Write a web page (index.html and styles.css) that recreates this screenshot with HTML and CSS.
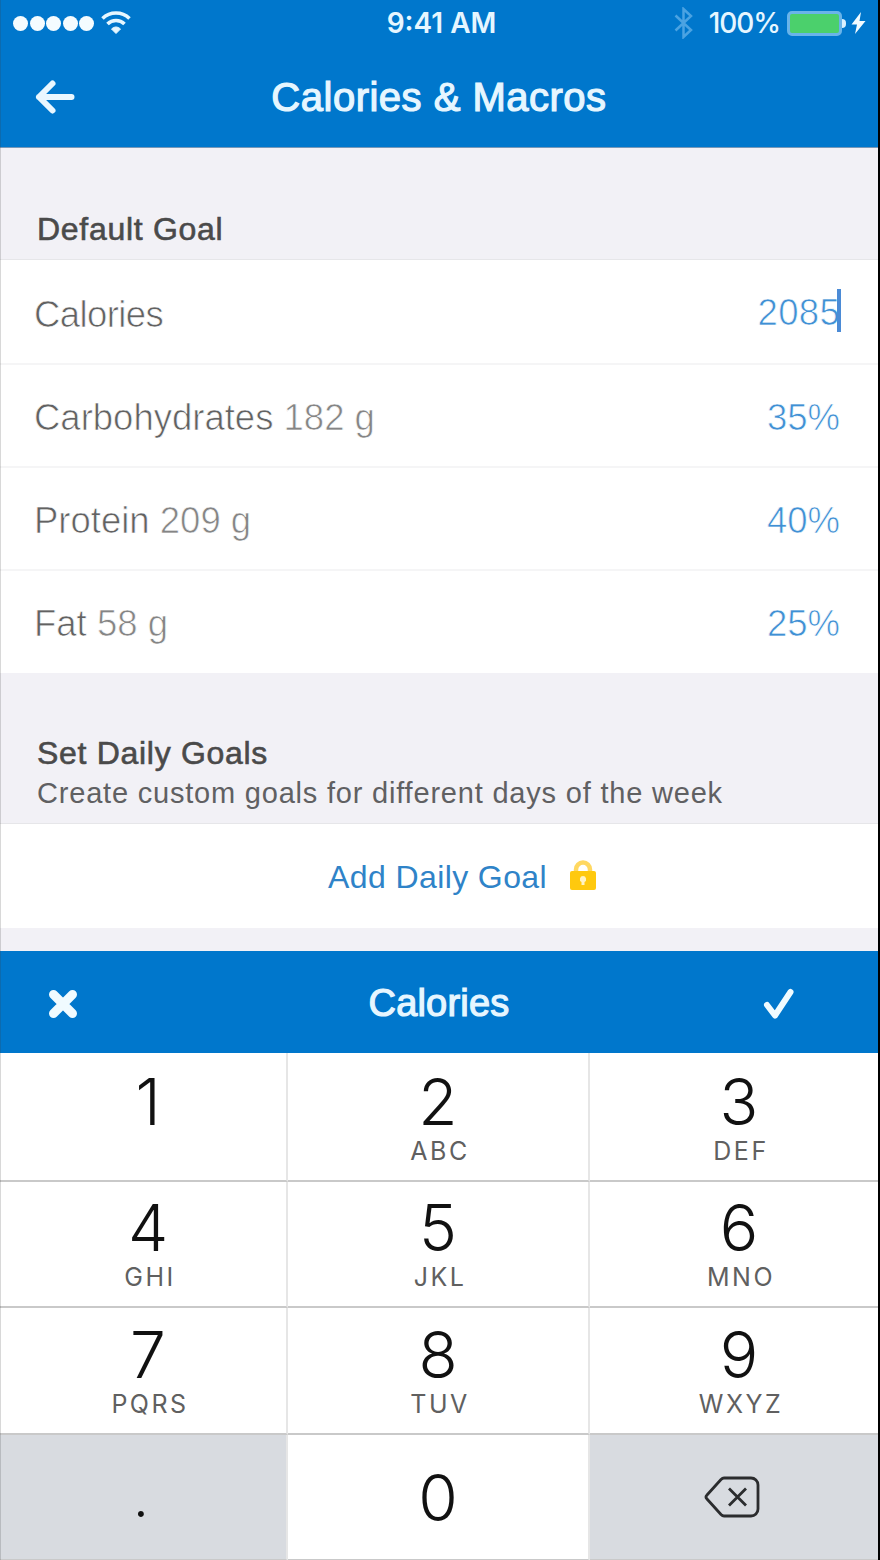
FILE: index.html
```html
<!DOCTYPE html>
<html lang="en">
<head>
  <meta charset="UTF-8" />
  <meta name="viewport" content="width=device-width, initial-scale=1.0"/>
  <title>Calories &amp; Macros</title>
  <link rel="stylesheet" href="styles.css">
</head>
<body>
  <div class="phone">
    <header class="header">
      <div class="status">
        <div class="status-left">
          <span class="signal"><i></i><i></i><i></i><i></i><i></i></span>
          <svg class="wifi" width="30" height="24" viewBox="0 0 30 24" fill="none" stroke="#e6f7ff" stroke-width="3.6">
            <path d="M1.500 8.500a19.500 19.500 0 0 1 27 0"/>
            <path d="M6.500 14a12 12 0 0 1 17 0"/>
            <path d="M15 23.500l-4.500-4.500a6 6 0 0 1 9 0z" fill="#e6f7ff" stroke-width="1"/>
          </svg>
        </div>
        <div class="time">9:41 AM</div>
        <div class="status-right">
          <svg class="bluetooth" width="20" height="32" viewBox="0 0 20 32" fill="none" stroke="#4ba3e2" stroke-width="2.500">
            <path d="M1.500 8.500l15.500 14.500l-7.500 7v-28l7.500 7l-15.500 14.500"/>
          </svg>
          <span class="percent">100%</span>
          <span class="battery"></span>
          <span class="battery-cap"></span>
          <svg class="bolt" width="15" height="22" viewBox="0 0 15 22" fill="#f2fbff">
            <path d="M10 0L0.500 12.500h5.500L4 22L14.500 9H8.500z"/>
          </svg>
        </div>
      </div>
      <div class="nav">
        <svg class="back" width="42" height="36" viewBox="0 0 42 36" fill="none" stroke="#e9f7ff" stroke-width="6" stroke-linecap="round" stroke-linejoin="round">
          <path d="M18.500 4.500L5 18l13.500 13.500M5 18h32.500"/>
        </svg>
        <h1>Calories &amp; Macros</h1>
      </div>
    </header>

    <section class="heading heading-default">
      <h2>Default Goal</h2>
    </section>

    <div class="rows">
      <div class="row">
        <span class="name short">Calories</span>
        <span class="value editing">2085</span>
      </div>
      <div class="row">
        <span class="name">Carbohydrates <span class="grams">182 g</span></span>
        <span class="value">35%</span>
      </div>
      <div class="row">
        <span class="name">Protein <span class="grams">209 g</span></span>
        <span class="value">40%</span>
      </div>
      <div class="row">
        <span class="name">Fat <span class="grams">58 g</span></span>
        <span class="value">25%</span>
      </div>
    </div>

    <section class="heading heading-daily">
      <h2>Set Daily Goals</h2>
      <p>Create custom goals for different days of the week</p>
    </section>

    <div class="add-goal">
      <span>Add Daily Goal</span>
      <svg class="lock" width="28" height="32" viewBox="0 0 28 32">
        <path d="M7 14V9.500a7 7 0 0 1 14 0V14" fill="none" stroke="#ffd861" stroke-width="4.500"/>
        <rect x="1" y="11" width="26" height="19" rx="2" fill="#ffc90e"/>
        <path d="M14 16a3.200 3.200 0 0 1 1.500 6v3h-3v-3a3.200 3.200 0 0 1 1.500-6z" fill="#fff3c4"/>
      </svg>
    </div>

    <div class="toolbar">
      <svg class="cancel" width="32" height="32" viewBox="0 0 32 32" stroke="#f0fbff" stroke-width="9">
        <path d="M6.500 6.500l19 19M25.500 6.500l-19 19" stroke-linecap="round"/>
      </svg>
      <span class="toolbar-title">Calories</span>
      <svg class="done" width="34" height="34" viewBox="0 0 34 34" fill="none" stroke="#f0fbff" stroke-width="6" stroke-linecap="round" stroke-linejoin="round">
        <path d="M5 18l8 10.500L28.500 5"/>
      </svg>
    </div>

    <div class="keypad">
      <div class="key side"><b>1</b></div>
      <div class="key"><b>2</b><small>ABC</small></div>
      <div class="key side"><b>3</b><small>DEF</small></div>
      <div class="key side"><b>4</b><small>GHI</small></div>
      <div class="key"><b>5</b><small>JKL</small></div>
      <div class="key side"><b>6</b><small>MNO</small></div>
      <div class="key side"><b>7</b><small>PQRS</small></div>
      <div class="key"><b>8</b><small>TUV</small></div>
      <div class="key side"><b>9</b><small>WXYZ</small></div>
      <div class="key gray dot"><b>.</b></div>
      <div class="key zero"><b>0</b></div>
      <div class="key gray erase">
        <svg width="56" height="42" viewBox="0 0 56 42" fill="none" stroke="#2b2c2e" stroke-width="2.800" stroke-linejoin="round">
          <path d="M20 2h27a7 7 0 0 1 7 7v24a7 7 0 0 1-7 7H20q-1.500 0-3-1.500L3 23q-2-2 0-4L17 3.500Q18.500 2 20 2z"/>
          <path d="M25 12.500l17 17M42 12.500l-17 17"/>
        </svg>
      </div>
    </div>
  </div>
</body>
</html>
```
FILE: styles.css
```css
* {
  box-sizing: border-box;
}

body {
  margin: 0;
  background: #000;
  font-family: "Liberation Sans", Arial, sans-serif;
}

.phone {
  position: relative;
  width: 878px;
  height: 1560px;
  background: #f2f1f6;
  overflow: hidden;
}

/* thin screen edge */
.phone::after {
  content: "";
  position: absolute;
  left: 0;
  top: 0;
  width: 1px;
  height: 100%;
  background: rgba(60, 60, 60, 0.2);
}

h1, h2, p {
  margin: 0;
  font-weight: normal;
}

/* top bar */
.header {
  height: 148px;
  background: #0077cc;
  color: #e6f6ff;
  border-bottom: 1px solid #7798b8;
}

.status {
  display: grid;
  grid-template-columns: 1fr auto 1fr;
  height: 44px;
  align-items: center;
  font-family: Inter, sans-serif;
  font-size: 28px;
  font-weight: 500;
  line-height: 46px;
}

.status-left {
  display: flex;
  align-items: center;
  padding-left: 13px;
}

.signal {
  display: flex;
  gap: 1.500px;
}

.signal i {
  width: 15px;
  height: 15px;
  border-radius: 50%;
  background: #f4fcff;
}

.wifi {
  margin: -3px 0 0 7px;
}

.time {
  font-weight: 600;
  padding-left: 5px;
}

.status-right {
  display: flex;
  align-items: center;
  justify-content: flex-end;
  padding-right: 12px;
}

.bluetooth {
  margin-right: 15px;
}

.percent {
  letter-spacing: -1.100px;
}

.battery {
  width: 55px;
  height: 25px;
  margin-left: 7px;
  background: #4bd06c;
  border: 3px solid #69b4e9;
  border-radius: 5px;
}

.battery-cap {
  width: 4px;
  height: 9px;
  background: #d8f0ff;
  border-radius: 0 4px 4px 0;
}

.bolt {
  margin-left: 5px;
}

.nav {
  display: grid;
  grid-template-columns: 120px 1fr 120px;
  align-items: center;
  height: 104px;
}

.back {
  margin-left: 34px;
}

h1 {
  font-size: 40px;
  line-height: 106px;
  letter-spacing: 0.500px;
  text-align: center;
  -webkit-text-stroke: 1.200px #e6f6ff;
}

/* goal list */
.heading {
  padding-left: 37px;
  color: #4a4a4a;
  border-bottom: 1px solid #e6e6e9;
}

.heading-default {
  height: 112px;
  padding-top: 62px;
}

.heading-daily {
  height: 151px;
  padding-top: 61px;
}

h2 {
  font-size: 32px;
  line-height: 38px;
  letter-spacing: 0.700px;
  -webkit-text-stroke: 0.600px #4a4a4a;
}

.heading p {
  font-size: 29px;
  line-height: 42px;
  letter-spacing: 0.800px;
  color: #606062;
}

.row {
  display: flex;
  justify-content: space-between;
  height: 103px;
  padding: 0 38px 0 34px;
  background: #fff;
  font-size: 36.500px;
  line-height: 109px;
  color: #626262;
  -webkit-text-stroke: 0.700px #fff;
}

.row + .row {
  border-top: 2px solid #f5f5f6;
  line-height: 105px;
}

.row:last-child {
  height: 104px;
}

.short {
  letter-spacing: -0.600px;
}

.grams {
  color: #858585;
}

.value {
  color: #4090d4;
}

.editing {
  position: relative;
  line-height: 106px;
  letter-spacing: 0.300px;
}

/* text cursor */
.editing::after {
  content: "";
  position: absolute;
  right: -1px;
  top: 29px;
  width: 4px;
  height: 43px;
  background: #4b8bd6;
}

.add-goal {
  display: flex;
  align-items: center;
  height: 104px;
  padding: 3px 0 0 328px;
  background: #fff;
  font-size: 32px;
  letter-spacing: 0.400px;
  color: #2f83c8;
}

.lock {
  margin: -3px 0 0 22px;
}

/* bar above keypad */
.toolbar {
  display: flex;
  align-items: center;
  justify-content: space-between;
  height: 102px;
  margin-top: 23px;
  padding: 3px 82px 0 47px;
  background: #0077cc;
}

.toolbar-title {
  padding-left: 37px;
  font-size: 38px;
  letter-spacing: 0.200px;
  line-height: 103px;
  color: #e6f6ff;
  -webkit-text-stroke: 1.200px #e6f6ff;
}

.keypad {
  display: grid;
  grid-template-columns: 288px 302px 288px;
  grid-template-rows: 129px 126px 127px 126px;
  font-family: Inter, sans-serif;
}

.key {
  display: flex;
  flex-direction: column;
  align-items: center;
  justify-content: flex-end;
  padding-bottom: 13px;
  background: #fff;
  border-right: 2px solid #e6e6e6;
  border-bottom: 2px solid #c9c9c9;
}

.key:nth-child(3n) {
  border-right: 0;
}

.side {
  padding-left: 10px;
}

.key b {
  font-size: 64px;
  font-weight: 350;
  line-height: 64px;
  color: #111;
}

.key b:only-child {
  margin-bottom: 33px;
}

.key small {
  height: 33px;
  font-size: 25px;
  line-height: 35px;
  letter-spacing: 2.500px;
  padding-left: 4px;
  color: #606060;
}

.gray {
  background: #d8dbe0;
}

.key.zero,
.key.gray {
  justify-content: center;
  padding-bottom: 0;
}

.key.zero b {
  margin: 2px 0 0;
}

.key.dot b {
  margin: 0 4px 0 0;
  font-size: 56px;
}

.key.erase {
  padding-right: 4px;
}
```
